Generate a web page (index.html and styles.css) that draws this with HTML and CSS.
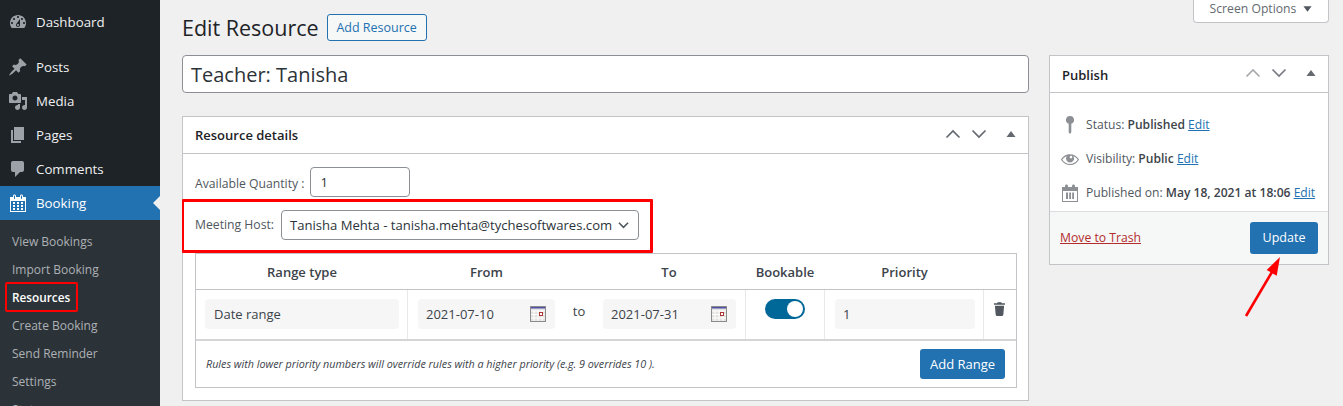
FILE: index.html
```html
<!DOCTYPE html>
<html lang="en">
<head>
<meta charset="utf-8">
<title>Edit Resource</title>
<link rel="stylesheet" href="styles.css">
</head>
<body>
<div class="page">
  <nav class="sidebar">
    <ul class="menu">
      <li class="item item-first"><svg class="mi" viewBox="0 0 20 20"><path d="M3.76 16h12.48c1.1-1.37 1.76-3.11 1.76-5 0-4.42-3.58-8-8-8s-8 3.58-8 8c0 1.89.66 3.63 1.76 5zM10 4c.55 0 1 .45 1 1s-.45 1-1 1-1-.45-1-1 .45-1 1-1zM6 6c.55 0 1 .45 1 1s-.45 1-1 1-1-.45-1-1 .45-1 1-1zm8 0c.55 0 1 .45 1 1s-.45 1-1 1-1-.45-1-1 .45-1 1-1zm-5.37 5.55L12 7v6c0 1.1-.9 2-2 2s-2-.9-2-2c0-.57.24-1.08.63-1.45zM4 10c.55 0 1 .45 1 1s-.45 1-1 1-1-.45-1-1 .45-1 1-1zm12 0c.55 0 1 .45 1 1s-.45 1-1 1-1-.45-1-1 .45-1 1-1zm-5 3c0-.55-.45-1-1-1s-1 .45-1 1 .45 1 1 1 1-.45 1-1z"/></svg>Dashboard</li>
      <li class="item item-sep"><svg class="mi" viewBox="0 0 20 20"><path d="M10.44 3.02l1.82-1.82 6.36 6.35-1.83 1.82c-1.05-.68-2.48-.57-3.41.36l-.75.75c-.92.93-1.04 2.35-.35 3.41l-1.83 1.82-2.41-2.41-2.8 2.79c-.42.42-3.38 2.71-3.8 2.29s1.86-3.39 2.28-3.81l2.79-2.79L4.1 9.36l1.83-1.82c1.05.69 2.48.57 3.4-.36l.75-.75c.93-.92 1.05-2.35.36-3.41z"/></svg>Posts</li>
      <li class="item"><svg class="mi" viewBox="0 0 20 20"><path d="M13 11V4c0-.55-.45-1-1-1h-1.67L9 1H5L3.67 3H2c-.55 0-1 .45-1 1v7c0 .55.45 1 1 1h10c.55 0 1-.45 1-1zM7 4.5c1.38 0 2.5 1.12 2.5 2.5S8.38 9.5 7 9.5 4.5 8.38 4.5 7 5.62 4.5 7 4.5zM14 6h5v10.5c0 1.38-1.12 2.5-2.5 2.5S14 17.88 14 16.5s1.12-2.5 2.5-2.5c.17 0 .34.02.5.05V9h-3V6zm-4 8.05V13h2v3.5c0 1.38-1.12 2.5-2.5 2.5S7 17.88 7 16.5 8.12 14 9.5 14c.17 0 .34.02.5.05z"/></svg>Media</li>
      <li class="item"><svg class="mi" viewBox="0 0 20 20"><path d="M6 15V2h10v13H6zm-1 1h8v2H3V5h2v11z"/></svg>Pages</li>
      <li class="item"><svg class="mi" viewBox="0 0 20 20"><path d="M5 2h9c1.1 0 2 .9 2 2v7c0 1.1-.9 2-2 2h-2l-5 5v-5H5c-1.1 0-2-.9-2-2V4c0-1.1.9-2 2-2z"/></svg>Comments</li>
      <li class="item item-current"><svg class="mi" viewBox="0 0 20 20"><path d="M15 4h3v15H2V4h3V3c0-.41.15-.76.44-1.06.29-.29.65-.44 1.06-.44s.77.15 1.06.44c.29.3.44.65.44 1.06v1h4V3c0-.41.15-.76.44-1.06.29-.29.65-.44 1.06-.44s.77.15 1.06.44c.29.3.44.65.44 1.06v1zM6 3v2.5c0 .14.05.26.15.36.09.09.21.14.35.14s.26-.05.35-.14c.1-.1.15-.22.15-.36V3c0-.14-.05-.26-.15-.35-.09-.1-.21-.15-.35-.15s-.26.05-.35.15c-.1.09-.15.21-.15.35zm7 0v2.5c0 .14.05.26.14.36.1.09.22.14.36.14s.26-.05.36-.14c.09-.1.14-.22.14-.36V3c0-.14-.05-.26-.14-.35-.1-.1-.22-.15-.36-.15s-.26.05-.36.15c-.09.09-.14.21-.14.35zm4 15V8H3v10h14zM7 9v2H5V9h2zm2 0h2v2H9V9zm4 2V9h2v2h-2zm-6 1v2H5v-2h2zm2 0h2v2H9v-2zm4 2v-2h2v2h-2zm-6 1v2H5v-2h2zm4 2H9v-2h2v2zm4 0h-2v-2h2v2z"/></svg>Booking</li>
    </ul>
    <ul class="submenu">
      <li>View Bookings</li>
      <li>Import Booking</li>
      <li class="sub-current"><span class="sub-mark">Resources</span></li>
      <li>Create Booking</li>
      <li>Send Reminder</li>
      <li>Settings</li>
      <li>Status</li>
    </ul>
  </nav>

  <main class="content">
    <div class="col-main">
      <header class="head">
        <h1 class="title">Edit Resource</h1>
        <a class="add-new">Add Resource</a>
      </header>
      <div class="title-input">Teacher: Tanisha</div>

      <section class="box details">
        <div class="box-head">
          <h2 class="box-title">Resource details</h2>
          <div class="box-tools">
            <svg class="tool" viewBox="0 0 16 10"><path d="M1.500 8.500 8 2l6.500 6.500"/></svg>
            <svg class="tool" viewBox="0 0 16 10"><path d="M1.500 1.500 8 8l6.500-6.500"/></svg>
            <svg class="tool-tri" viewBox="0 0 10 6"><path d="M5 0l4.500 6H.5z"/></svg>
          </div>
        </div>
        <div class="details-body">
          <div class="qty-row">
            <span class="lbl lbl-qty">Available Quantity :</span>
            <div class="field field-qty">1</div>
          </div>
          <div class="host-row">
            <span class="lbl">Meeting Host:</span>
            <div class="field field-select">
              <span>Tanisha Mehta - tanisha.mehta@tychesoftwares.com</span>
              <svg class="chev" viewBox="0 0 12 8"><path d="M1 1.500 6 6.500l5-5"/></svg>
            </div>
          </div>

          <div class="ranges">
            <div class="rgrid rhead">
              <div>Range type</div>
              <div>From</div>
              <div></div>
              <div>To</div>
              <div>Bookable</div>
              <div>Priority</div>
              <div></div>
            </div>
            <div class="rgrid rrow">
              <div class="rcell rcell-line rcell-type"><div class="soft">Date range</div></div>
              <div class="rcell"><div class="soft soft-date">2021-07-10
                <svg class="cal" viewBox="0 0 16 16"><rect width="16" height="16" fill="#e4e2df"/><path d="M.5 5h15M.5 8.500h15M.5 12h15M4 4v12M8 4v12M12 4v12" stroke="#fff"/><rect width="16" height="2.500" fill="#4e50a8"/><rect x=".5" y=".5" width="15" height="15" fill="none" stroke="#8b8b8b"/><rect x="9.500" y="6.500" width="3" height="3" fill="#fff" stroke="#a33"/></svg>
              </div></div>
              <div class="rto">to</div>
              <div class="rcell rcell-to"><div class="soft soft-date">2021-07-31
                <svg class="cal" viewBox="0 0 16 16"><rect width="16" height="16" fill="#e4e2df"/><path d="M.5 5h15M.5 8.500h15M.5 12h15M4 4v12M8 4v12M12 4v12" stroke="#fff"/><rect width="16" height="2.500" fill="#4e50a8"/><rect x=".5" y=".5" width="15" height="15" fill="none" stroke="#8b8b8b"/><rect x="9.500" y="6.500" width="3" height="3" fill="#fff" stroke="#a33"/></svg>
              </div></div>
              <div class="rcell rcell-line rcell-left"><span class="toggle"><span class="knob"></span></span></div>
              <div class="rcell rcell-line rcell-prio"><div class="soft">1</div></div>
              <div class="rcell rcell-trash">
                <svg class="trash" viewBox="0 0 12 15"><path d="M4 0h4l.5 1.200H12v1.600H0V1.200h3.500zM1 4h10l-.8 9.600c-.1.8-.6 1.400-1.400 1.400H3.200c-.8 0-1.300-.6-1.400-1.400z"/></svg>
              </div>
            </div>
            <div class="rfoot">
              <em class="note">Rules with lower priority numbers will override rules with a higher priority (e.g. 9 overrides 10 ).</em>
              <a class="btn btn-range">Add Range</a>
            </div>
          </div>
        </div>
      </section>
    </div>

    <aside class="col-side">
      <div class="screen-options">Screen Options <svg class="so-tri" viewBox="0 0 10 6"><path d="M5 6 .5 0h9z"/></svg></div>
      <section class="box publish">
        <div class="box-head">
          <h2 class="box-title">Publish</h2>
          <div class="box-tools">
            <svg class="tool tool-faint" viewBox="0 0 16 10"><path d="M1.500 8.500 8 2l6.500 6.500"/></svg>
            <svg class="tool tool-mid" viewBox="0 0 16 10"><path d="M1.500 1.500 8 8l6.500-6.500"/></svg>
            <svg class="tool-tri" viewBox="0 0 10 6"><path d="M5 0l4.500 6H.5z"/></svg>
          </div>
        </div>
        <div class="pub-body">
          <div class="pub-row">
            <svg class="pi" viewBox="0 0 20 20"><path d="M10 1a4 4 0 0 1 1.300 7.800v8.400L10 19l-1.300-1.800V8.800A4 4 0 0 1 10 1z"/></svg>
            <span>Status: <b>Published</b> <a class="lnk">Edit</a></span>
          </div>
          <div class="pub-row">
            <svg class="pi" viewBox="0 0 20 20"><path d="M18.300 9.500C15 4.900 8.500 3.800 3.900 7.200c-1.200.9-2.200 2.100-3 3.400.2.4.5.8.8 1.200 3.300 4.600 9.600 5.600 14.200 2.400.9-.7 1.700-1.400 2.400-2.400.3-.4.5-.8.8-1.200-.3-.4-.5-.8-.8-1.100zm-8.200-2.300c.5-.5 1.300-.5 1.800 0s.5 1.300 0 1.800-1.300.5-1.800 0c-.5-.4-.5-1.300 0-1.800zm-.1 7.700c-3.100 0-6-1.600-7.700-4.200C3.500 9 5.100 7.800 7 7c-.7.8-1 1.600-1 2.500 0 2.200 1.700 4.100 4 4.100 2.200 0 4.100-1.700 4.100-4 0-.9-.3-1.800-.9-2.500 1.900.8 3.400 2 4.500 3.700-1.700 2.600-4.600 4.200-7.700 4.200z"/></svg>
            <span>Visibility: <b>Public</b> <a class="lnk">Edit</a></span>
          </div>
          <div class="pub-row">
            <svg class="pi" viewBox="0 0 20 20"><path d="M15 4h3v15H2V4h3V3c0-.41.15-.76.44-1.060.29-.29.65-.44 1.060-.44s.77.15 1.060.44c.29.3.44.65.44 1.060v1h4V3c0-.41.15-.76.44-1.060.29-.29.65-.44 1.060-.44s.77.15 1.060.44c.29.3.44.65.44 1.060v1zM3 8v10h14V8zm3 1.500h2V16H6zm3.200 0h1.800V16H9.200zm3 0H14V16h-1.800z"/></svg>
            <span>Published on: <b>May 18, 2021 at 18:06</b> <a class="lnk">Edit</a></span>
          </div>
        </div>
        <div class="pub-foot">
          <a class="trash-link">Move to Trash</a>
          <a class="btn btn-update">Update</a>
        </div>
      </section>
    </aside>
  </main>
</div>
<svg class="arrow" viewBox="0 0 48 68"><path d="M6 64 32 20" stroke="#f00" stroke-width="2.600" fill="none"/><path d="M40 5 36.700 23.700 26.700 18z" fill="#f00"/></svg>
</body>
</html>
```
FILE: styles.css
```css
* { box-sizing: border-box; }
html, body { margin: 0; padding: 0; height: 406px; overflow: hidden; }
body { position: relative; background: #f0f0f1; color: #3c434a; font: 13px/18px "Open Sans", "Noto Sans", sans-serif; }
ul { list-style: none; margin: 0; padding: 0; }
h1, h2 { margin: 0; font-weight: 400; }
svg { display: block; flex: none; }

.page { display: flex; height: 406px; }

.sidebar { width: 160px; flex: none; height: 406px; overflow: hidden; background: #1d2327; color: #f0f0f1; }
.menu { padding-top: 5px; }
.item { position: relative; display: flex; align-items: center; height: 34px; padding-left: 8px; font-size: 13.3px; gap: 8px; }
.item-sep { margin-top: 11px; }
.mi { width: 20px; height: 20px; fill: #9ca2a7; }
.item-current { background: #2271b1; color: #fff; }
.item-current .mi { fill: #fff; }
.item-current::after { content: ""; position: absolute; right: 0; top: 10px; border: 7px solid transparent; border-left: 0; border-right: 7px solid #f0f0f1; }
.submenu { background: #2c3338; padding: 8px 0 0; color: #adb1b6; font-size: 12px; }
.submenu li { height: 28px; line-height: 28px; padding-left: 12px; }
.sub-current { color: #fff; font-weight: 600; }
.sub-mark { display: inline-block; width: 73px; height: 30px; line-height: 26px; margin: -2px 0 0 -7px; padding-left: 5px; border: 2px solid #f00; border-radius: 2px; vertical-align: top; font-size: 11.8px; }

.content { flex: 1; display: flex; min-width: 0; padding-left: 22px; gap: 20px; }
.col-main { width: 847px; flex: none; }
.col-side { width: 280px; flex: none; }

.head { display: flex; align-items: center; gap: 8px; height: 27px; margin-top: 14px; }
.title { font-size: 21.5px; line-height: 27px; color: #1d2327; }
.add-new { display: flex; align-items: center; justify-content: center; width: 100px; height: 27px; padding-top: 1px; border: 1px solid #2271b1; border-radius: 3px; background: #f6f7f7; color: #2271b1; font-size: 12.5px; }

.title-input { height: 38px; margin-top: 14px; padding: 0 8px; background: #fff; border: 1px solid #8c8f94; border-radius: 4px; color: #2c3338; font-size: 20px; line-height: 38px; }

.box { background: #fff; border: 1px solid #c3c4c7; }
.box-head { display: flex; align-items: center; justify-content: space-between; height: 37px; border-bottom: 1px solid #c3c4c7; padding: 0 12px; }
.box-title { font-size: 13px; font-weight: 600; color: #1d2327; }
.publish .box-title { padding-top: 2px; }
.box-tools { display: flex; align-items: center; }
.tool { width: 16px; height: 10px; fill: none; stroke: #646970; stroke-width: 1.7; margin-right: 10px; margin-top: -2px; }
.tool-faint { stroke: #a7aaad; }
.tool-mid { stroke: #787c82; }
.tool-tri { width: 10px; height: 6px; margin: -3px 0 0 9px; fill: #646970; }

.details { margin-top: 23px; height: 285px; }
.details-body { padding: 0 12px; }
.qty-row { display: flex; align-items: center; gap: 6px; padding-top: 13px; height: 43px; }
.lbl { font-size: 12.2px; color: #50575e; }
.lbl-qty { padding-top: 3px; }
.field { height: 30px; background: #fff; border: 1px solid #8c8f94; border-radius: 4px; color: #2c3338; display: flex; align-items: center; }
.field-qty { width: 100px; padding-left: 9px; font-size: 13px; }
.host-row { display: flex; align-items: center; gap: 7px; height: 54px; margin: 2px 0 0 -13px; width: 471px; padding: 0 0 2px 11px; border: 3px solid #f00; border-left-width: 2px; border-radius: 1px; position: relative; z-index: 1; }
.field-select { width: 358px; justify-content: space-between; padding: 0 9px 0 8px; font-size: 13.08px; white-space: nowrap; }
.chev { width: 11px; height: 8px; fill: none; stroke: #50575e; stroke-width: 1.7; }

.ranges { border: 1px solid #c3c4c7; height: 135px; width: 822px; }
.rgrid { display: grid; grid-template-columns: 212px 157px 28px 152px 80px 159px 1fr; }
.rhead { height: 36px; align-items: center; text-align: center; border-bottom: 1px solid #c3c4c7; font-size: 13px; font-weight: 600; color: #3c434a; }
.rrow { height: 51px; border-bottom: 2px solid #d4d5d7; }
.rcell { padding: 9px 10px 0 10px; }
.rcell-line { border-right: 1px solid #e8e8e9; }
.rcell-type { padding-left: 9px; padding-right: 8px; }
.rcell-type .soft { padding-left: 9px; }
.rcell-prio { padding-right: 8px; }
.rcell-to { padding-left: 10px; padding-right: 9px; }
.soft { display: flex; align-items: center; justify-content: space-between; height: 30px; padding: 0 8px; background: #f6f6f6; border-radius: 4px; font-size: 13px; color: #3c434a; }
.cal { width: 16px; height: 16px; margin-right: 1px; }
.rto { text-align: center; padding-top: 12px; font-size: 13px; }
.rcell-left { padding: 9px 0 0 19px; border-left: 1px solid #e8e8e9; }
.toggle { display: block; width: 40px; height: 20px; border-radius: 10px; background: #006799; position: relative; }
.knob { position: absolute; right: 2px; top: 2px; width: 16px; height: 16px; border-radius: 50%; background: #fff; }
.rcell-trash { padding: 12px 0 0 10px; }
.trash { width: 11px; height: 14px; fill: #50575e; }
.rfoot { display: flex; align-items: center; justify-content: space-between; height: 46px; padding: 0 11px 0 10px; }
.note { font-size: 10.75px; color: #3c434a; white-space: nowrap; }
.btn { display: flex; align-items: center; justify-content: center; height: 30px; background: #2271b1; color: #fff; border-radius: 3px; font-size: 13px; }
.btn-range { width: 85px; flex: none; }

.screen-options { display: flex; align-items: center; justify-content: center; gap: 7px; width: 136px; height: 23px; margin: 0 0 32px auto; background: #fff; border: 1px solid #c3c4c7; border-top: 0; border-radius: 0 0 4px 4px; color: #646970; font-size: 12.2px; padding-bottom: 4px; }
.so-tri { width: 9px; height: 6px; fill: #50575e; }

.publish { height: 210px; }
.pub-body { height: 118px; padding-top: 15px; }
.pub-row { display: flex; align-items: center; gap: 6px; height: 34px; padding-left: 10px; font-size: 12.1px; white-space: nowrap; color: #50575e; }
.pub-row b { font-weight: 600; color: #3c434a; }
.pi { width: 20px; height: 20px; fill: #8c8f94; }
.lnk { color: #2271b1; text-decoration: underline; }
.pub-foot { display: flex; align-items: center; justify-content: space-between; height: 53px; padding: 0 10px; background: #f6f7f7; border-top: 1px solid #dcdcde; }
.trash-link { color: #b32d2e; text-decoration: underline; font-size: 12.2px; }
.btn-update { width: 68px; height: 32px; font-size: 12.5px; }

.arrow { position: absolute; left: 1240px; top: 252px; width: 48px; height: 68px; }
```
